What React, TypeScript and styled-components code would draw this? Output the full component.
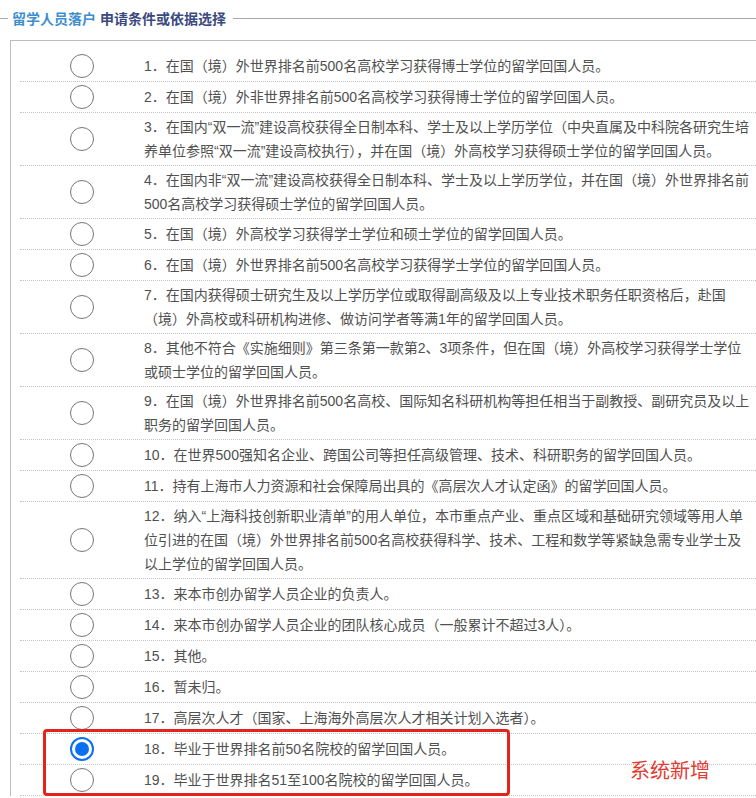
import React from "react";
import styled, { createGlobalStyle } from "styled-components";

const GlobalStyle = createGlobalStyle`
    html, body {
        margin: 0;
        padding: 0;
        background: #fff;
        overflow: hidden;
    }
    body {
        font-family: "Liberation Sans", "Noto Sans CJK SC", sans-serif;
    }
`

const Page = styled.div`
    position: relative;
    width: 756px;
    height: 798px;
    overflow: hidden;
`

const Legend = styled.div`
    height: 36px;
    margin-bottom: 4px;
    display: flex;
    align-items: center;
    font-size: 14px;
    font-weight: bold;
    &::before {
        content: "";
        width: 8px;
        height: 1px;
        background: #a9a9a9;
        margin-right: 4px;
    }
    &::after {
        content: "";
        flex: 1;
        height: 1px;
        background: #a9a9a9;
        margin-left: 7px;
    }
`

const LegendPart = styled.span<{ $dark?: boolean }>`
    color: ${p => (p.$dark ? "#3b4a7e" : "#3f8fce")};
    margin-right: ${p => (p.$dark ? "0" : "4px")};
`

const Box = styled.div`
    margin-left: 10px;
    border-left: 1px solid #bcbcbc;
    border-top: 1px solid #bcbcbc;
    padding: 10px 0 0 9px;
`

const Row = styled.div`
    display: grid;
    grid-template-columns: 124px 1fr;
    align-items: center;
    border-bottom: 1px dotted #c4c4c4;
`

const RadioCell = styled.div`
    height: 30px;
    display: flex;
    align-items: center;
    justify-content: center;
`

const Radio = styled.span<{ $checked?: boolean }>`
    box-sizing: border-box;
    width: 24px;
    height: 24px;
    border-radius: 50%;
    background: #fff;
    border: ${p => (p.$checked ? "2px solid #0b6ff2" : "1px solid #767676")};
    display: flex;
    align-items: center;
    justify-content: center;
    &::after {
        content: "";
        display: ${p => (p.$checked ? "block" : "none")};
        width: 14px;
        height: 14px;
        border-radius: 50%;
        background: #0b6ff2;
    }
`

const Text = styled.div`
    padding: 2px 0;
    font-size: 14px;
    line-height: 24px;
    color: #505050;
    white-space: nowrap;
`

const Mark = styled.div`
    position: absolute;
    left: 43px;
    top: 729px;
    width: 467px;
    height: 67px;
    box-sizing: border-box;
    border: 3px solid #e3231c;
    border-radius: 4px;
`

const Note = styled.div`
    position: absolute;
    left: 630px;
    top: 756px;
    font-family: "Noto Sans CJK SC", sans-serif;
    font-size: 20px;
    line-height: 28px;
    color: #e33a32;
`

const items: string[][] = [
    ["1．在国（境）外世界排名前500名高校学习获得博士学位的留学回国人员。"],
    ["2．在国（境）外非世界排名前500名高校学习获得博士学位的留学回国人员。"],
    [
        "3．在国内“双一流”建设高校获得全日制本科、学士及以上学历学位（中央直属及中科院各研究生培",
        "养单位参照“双一流”建设高校执行），并在国（境）外高校学习获得硕士学位的留学回国人员。",
    ],
    [
        "4．在国内非“双一流”建设高校获得全日制本科、学士及以上学历学位，并在国（境）外世界排名前",
        "500名高校学习获得硕士学位的留学回国人员。",
    ],
    ["5．在国（境）外高校学习获得学士学位和硕士学位的留学回国人员。"],
    ["6．在国（境）外世界排名前500名高校学习获得学士学位的留学回国人员。"],
    [
        "7．在国内获得硕士研究生及以上学历学位或取得副高级及以上专业技术职务任职资格后，赴国",
        "（境）外高校或科研机构进修、做访问学者等满1年的留学回国人员。",
    ],
    [
        "8．其他不符合《实施细则》第三条第一款第2、3项条件，但在国（境）外高校学习获得学士学位",
        "或硕士学位的留学回国人员。",
    ],
    [
        "9．在国（境）外世界排名前500名高校、国际知名科研机构等担任相当于副教授、副研究员及以上",
        "职务的留学回国人员。",
    ],
    ["10．在世界500强知名企业、跨国公司等担任高级管理、技术、科研职务的留学回国人员。"],
    ["11．持有上海市人力资源和社会保障局出具的《高层次人才认定函》的留学回国人员。"],
    [
        "12．纳入“上海科技创新职业清单”的用人单位，本市重点产业、重点区域和基础研究领域等用人单",
        "位引进的在国（境）外世界排名前500名高校获得科学、技术、工程和数学等紧缺急需专业学士及",
        "以上学位的留学回国人员。",
    ],
    ["13．来本市创办留学人员企业的负责人。"],
    ["14．来本市创办留学人员企业的团队核心成员（一般累计不超过3人）。"],
    ["15．其他。"],
    ["16．暂未归。"],
    ["17．高层次人才（国家、上海海外高层次人才相关计划入选者）。"],
    ["18．毕业于世界排名前50名院校的留学回国人员。"],
    ["19．毕业于世界排名51至100名院校的留学回国人员。"],
]

export default function App() {
    const selected = 17
    return (
        <Page>
            <GlobalStyle />
            <Legend>
                <LegendPart>留学人员落户</LegendPart>
                <LegendPart $dark>申请条件或依据选择</LegendPart>
            </Legend>
            <Box>
                {items.map((lines, i) => (
                    <Row key={i}>
                        <RadioCell>
                            <Radio $checked={i === selected} />
                        </RadioCell>
                        <Text>
                            {lines.map((line, j) => (
                                <div key={j}>{line}</div>
                            ))}
                        </Text>
                    </Row>
                ))}
            </Box>
            <Mark />
            <Note>系统新增</Note>
        </Page>
    );
}
